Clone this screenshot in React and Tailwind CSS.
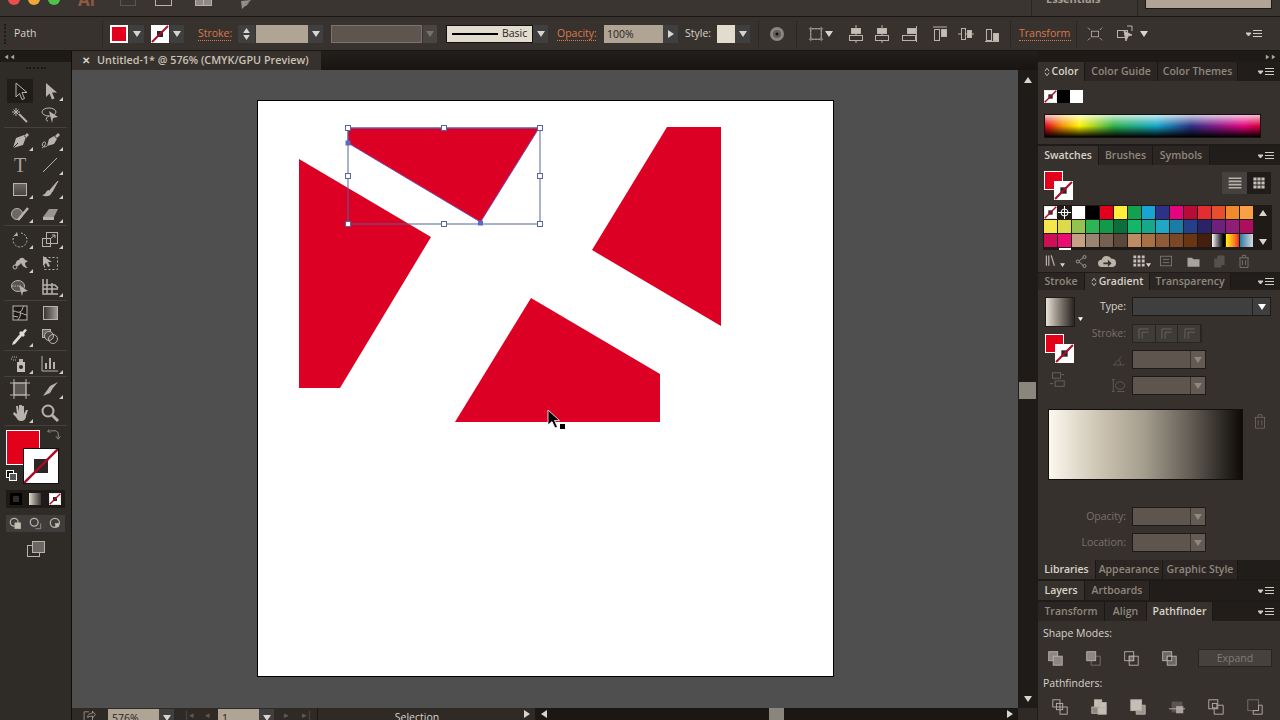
import React from 'react';

const SWATCHES = [
    ['#ffffff', '#ffffff', '#ffffff', '#000000', '#e2001a', '#ffed3b', '#12a150', '#17a6d3', '#2e3188', '#e4047f', '#b80c36', '#e42d30', '#e84e2c', '#f18a2d', '#f7a044'],
    ['#f5e64b', '#dcd94a', '#93c24f', '#2fb455', '#129a4a', '#0a6f3a', '#12b76a', '#17a88b', '#22a6c5', '#1b7ca6', '#263f8a', '#2b2367', '#6c217f', '#901d78', '#ab0f5e'],
    ['#cf0f55', '#ea0c72', '#c4a183', '#9a8371', '#74614f', '#5a473a', '#bf8b62', '#a96f45', '#8f5a38', '#7c4724', '#693512', '#461e0d'],
];

function Caret({ className = '', size = 'w-2 h-1.5', tone = 'text-[#d8d4ce]' }) {
    return (
        <svg viewBox="0 0 8 6" className={`shrink-0 ${size} ${tone} ${className}`}>
            <path d="M0 0h8L4 6z" fill="currentColor" />
        </svg>
    );
}

function Drop({ className = '', bg = 'bg-[#3f3f3f]', tone }) {
    return (
        <div className={`h-[18px] flex items-center justify-center ${bg} ${className}`}>
            <Caret tone={tone} />
        </div>
    );
}

function Sep({ className = '' }) {
    return <div className={`w-px h-[26px] bg-[#2a2623] ${className}`} />;
}

function Label({ children, className = '' }) {
    return <div className={`text-[10.5px] text-[#d87a4a] border-b border-dotted border-[#d87a4a] leading-[13px] whitespace-nowrap ${className}`}>{children}</div>;
}

function Ico({ children, className = 'w-5 h-5' }) {
    return (
        <svg viewBox="0 0 20 20" fill="none" stroke="currentColor" className={`text-[#b8b2a9] shrink-0 ${className}`}>
            {children}
        </svg>
    );
}

function NoneBox({ className = '' }) {
    return (
        <svg viewBox="0 0 18 18" className={`shrink-0 ${className}`}>
            <rect x="0.5" y="0.5" width="17" height="17" fill="#fff" stroke="#fff" />
            <rect x="6" y="6" width="6" height="6" fill="#2b2724" />
            <path d="M1 17L17 1" stroke="#a80d2a" strokeWidth="2" />
        </svg>
    );
}

function FillStroke() {
    return (
        <div className="relative w-[30px] h-[28px]">
            <div className="w-[19px] h-[19px] bg-[#e2001a] border border-white" />
            <NoneBox className="absolute left-[10px] top-[10px] w-[19px] h-[19px]" />
        </div>
    );
}

function AlignIcon({ kind }) {
    const shapes = {
        a: <><path d="M10 1v18" /><rect x="5.5" y="4.5" width="9" height="5" fill="#c4beb5" /><rect x="3.5" y="11.5" width="13" height="5" fill="#38322e" /></>,
        b: <><path d="M17.500 2v16" /><rect x="8.500" y="4.500" width="8" height="5" fill="#c4beb5" /><rect x="3.500" y="11.500" width="13" height="5" /></>,
        c: <><path d="M3 3h14" /><rect x="4.500" y="5.500" width="5" height="11" /><rect x="11.500" y="5.500" width="5" height="7" fill="#c4beb5" /></>,
        d: <><path d="M2 10h16" /><rect x="5.500" y="4.500" width="4" height="11" fill="#38322e" /><rect x="11.500" y="6.500" width="4" height="7" fill="#c4beb5" /></>,
        e: <><path d="M3 17.500h14" /><rect x="4.500" y="5.500" width="5" height="11" /><rect x="11.500" y="9.500" width="5" height="7" fill="#c4beb5" /></>,
    };
    return <Ico>{shapes[kind]}</Ico>;
}

function MenuIcon() {
    return (
        <svg viewBox="0 0 16 8" className="w-4 h-2 text-[#d0cbc3]">
            <path d="M0 3h5L2.500 6z M7 0.500h9M7 3.500h9M7 6.500h9" fill="currentColor" stroke="currentColor" strokeWidth="1" />
        </svg>
    );
}

function ControlBar() {
    return (
        <div className="h-[34px] flex items-center bg-[#38322e] border-b border-[#191614] shrink-0 text-[10.5px] text-[#d8d3cb] [&>*]:shrink-0">
            <div className="ml-1 w-[3px] h-5 border-l-2 border-dotted border-[#1d1a18]" />
            <div className="ml-[7px] w-[88px]">Path</div>
            <Sep />
            <div className="ml-[7px] w-[18px] h-[18px] bg-[#e2001a] border-2 border-white" />
            <Drop className="ml-px w-[15px]" />
            <NoneBox className="ml-[7px] w-[18px] h-[18px]" />
            <Drop className="ml-px w-[14px]" />
            <Label className="ml-[14px] w-[33px]">Stroke:</Label>
            <div className="ml-[7px] w-[17px] h-[18px] bg-[#3f3f3f] flex flex-col items-center justify-center gap-[2px]">
                <Caret className="rotate-180" size="w-[7px] h-[5px]" />
                <Caret size="w-[7px] h-[5px]" />
            </div>
            <div className="ml-px w-[52px] h-[18px] bg-[#b0a595]" />
            <Drop className="w-[15px]" />
            <div className="ml-[8px] w-[91px] h-[18px] bg-[#5e554f] border border-[#7b736b]" />
            <Drop className="ml-px w-[14px]" bg="bg-[#4a4541]" tone="text-[#77716a]" />
            <div className="ml-[9px] w-[87px] h-[18px] bg-[#e2dccf] flex items-center pl-[5px] text-[#26221f] border border-[#111]">
                <div className="w-[46px] h-[2px] bg-black" />
                <span className="ml-[4px]">Basic</span>
            </div>
            <Drop className="w-[15px]" />
            <Label className="ml-[9px] w-[39px]">Opacity:</Label>
            <div className="ml-[8px] w-[59px] h-[18px] bg-[#b0a595] text-[#26221f] pl-[3px] leading-[18px]">100%</div>
            <div className="w-[15px] h-[18px] bg-[#3f3f3f] flex items-center justify-center">
                <Caret className="-rotate-90" />
            </div>
            <div className="ml-[7px] w-[25px]">Style:</div>
            <div className="ml-[7px] w-[18px] h-[18px] bg-[#e2dccf]" />
            <Drop className="w-[15px]" />
            <Sep className="ml-[8px]" />
            <svg viewBox="0 0 16 16" className="ml-[10px] w-4 h-4">
                <circle cx="8" cy="8" r="7" fill="#8b8680" />
                <circle cx="8" cy="8" r="4" fill="#625d58" />
                <circle cx="8" cy="8" r="1.500" fill="#111" />
            </svg>
            <Sep className="ml-[11px]" />
            <Ico className="ml-[11px] w-[16px] h-[16px]">
                <rect x="3.500" y="3.500" width="13" height="13" />
                <path d="M1 3.500h18M1 16.500h18M3.500 1v18M16.500 1v18" strokeDasharray="2 2" />
            </Ico>
            <Caret className="ml-px" />
            <div className="ml-[13px]"><AlignIcon kind="a" /></div>
            <div className="ml-[6px]"><AlignIcon kind="a" /></div>
            <div className="ml-[7px]"><AlignIcon kind="b" /></div>
            <div className="ml-[11px]"><AlignIcon kind="c" /></div>
            <div className="ml-[6px]"><AlignIcon kind="d" /></div>
            <div className="ml-[6px]"><AlignIcon kind="e" /></div>
            <Sep className="ml-[8px]" />
            <Label className="ml-[8px] w-[52px]">Transform</Label>
            <Sep className="ml-[5px]" />
            <Ico className="ml-[10px] w-4 h-4">
                <rect x="5.500" y="6.500" width="9" height="7" />
                <path d="M1 2l3 3M19 2l-3 3M1 18l3-3M19 18l-3-3" />
            </Ico>
            <Ico className="ml-[12px] w-5 h-5">
                <rect x="2.500" y="6.500" width="10" height="7" />
                <path d="M9 7l8 4-4 1-2 5z" fill="#c4beb5" />
                <path d="M12 2l5 0 0 5" />
            </Ico>
            <Caret className="ml-[5px]" />
            <div className="ml-auto mr-[18px]"><MenuIcon /></div>
        </div>
    );
}

function TopBar() {
    return (
        <div className="h-[17px] flex bg-[#3a3531] border-b border-[#191614] overflow-hidden shrink-0 [&>*]:shrink-0">
            <div className="ml-2 -mt-[7px] w-3 h-3 rounded-full bg-[#ec4f4b]" />
            <div className="ml-2 -mt-[7px] w-3 h-3 rounded-full bg-[#f0a73a]" />
            <div className="ml-2 -mt-[7px] w-3 h-3 rounded-full bg-[#4cc44a]" />
            <div className="ml-[18px] -mt-[9px] w-[18px] text-[17px] font-bold text-[#8f5a41] leading-[17px]">Ai</div>
            <div className="ml-[24px] -mt-[9px] w-4 h-[15px] border border-[#5c5650]" />
            <div className="ml-[19px] -mt-[9px] w-[17px] h-[15px] border border-[#b8b2aa]" />
            <div className="ml-[23px] -mt-[9px] w-[17px] h-[15px] border border-[#b8b2aa] flex">
                <div className="w-1/2 border-r border-[#b8b2aa] bg-[#8e8982]" />
                <div className="w-1/2 bg-[#8e8982]" />
            </div>
            <svg viewBox="0 0 12 10" className="ml-[28px] w-3 h-[10px] text-[#938e87]">
                <path d="M1 1l10-1-3 3-4 1 5-1-3 3-3 0 2 0-3 3z" fill="currentColor" />
            </svg>
            <div className="ml-auto w-px h-full bg-[#2a2623]" />
            <div className="w-[105px] pl-[14px] -mt-[8px] text-[11px] font-bold text-[#a59e94] leading-[14px]">Essentials</div>
            <div className="w-px h-full bg-[#2a2623]" />
            <div className="ml-[7px] mr-[8px] w-[127px] h-[9px] bg-[#b0a595] border border-[#1d1a18] border-t-0" />
        </div>
    );
}

function Tool({ children, corner, active }) {
    return (
        <div className={`relative w-[26px] h-[24px] flex items-center justify-center ${active ? 'bg-[#1f1c1a]' : ''}`}>
            {children}
            {corner && <div className="absolute right-0 bottom-[2px] w-0 h-0 border-l-[4px] border-l-transparent border-b-[4px] border-b-[#d0cbc3]" />}
        </div>
    );
}

function ToolRow({ left, right, lc, rc, active }) {
    return (
        <div className="flex gap-[4px] pl-[7px] h-[24px] shrink-0">
            <Tool corner={lc} active={active}>{left}</Tool>
            <Tool corner={rc}>{right}</Tool>
        </div>
    );
}

function Rule({ className = '' }) {
    return <div className={`mx-[4px] h-px bg-[#45403b] shrink-0 ${className}`} />;
}

const grey = '#b8b2aa';

function Toolbar() {
    return (
        <div className="w-[72px] shrink-0 bg-[#2f2b27] border-r border-[#0f0d0c] flex flex-col">
            <div className="h-[11px] bg-[#1d1a18] flex items-center pl-1 gap-px shrink-0">
                <Caret className="rotate-90" size="w-[5px] h-1" tone="text-[#a8a39c]" />
                <Caret className="rotate-90" size="w-[5px] h-1" tone="text-[#a8a39c]" />
            </div>
            <div className="mx-auto mt-[5px] mb-[10px] w-[20px] h-[2px] border-t-2 border-dotted border-[#1a1715] shrink-0" />
            <ToolRow
                active
                left={<Ico><path d="M6 2v14l3.500-3.500 2.500 6 2.500-1-2.500-6h5z" /></Ico>}
                right={<Ico><path d="M6 2v14l3.500-3.500 2.500 6 2.500-1-2.500-6h5z" fill={grey} stroke="none" /></Ico>}
                rc
            />
            <ToolRow
                left={<Ico><path d="M6 3v8M2 7h8M3.500 4.500l5 5M8.500 4.500l-5 5" /><path d="M9 9l8 8" strokeWidth="2" /></Ico>}
                right={<Ico><ellipse cx="9" cy="7" rx="7" ry="4" /><path d="M8 16c-3 0-2-4 1-5" /><path d="M9 6l9 6-5 1-1 5z" fill={grey} stroke="none" /></Ico>}
            />
            <Rule className="mb-[1px]" />
            <ToolRow
                lc
                rc
                left={<Ico><path d="M17 2l2 2-3 3-2-2zM14 4L6 7 3 17l10-3 3-8z" fill={grey} stroke="none" /><path d="M3 17l5-5" stroke="#2f2b27" /></Ico>}
                right={<Ico><path d="M18 2l2 2-3 3-2-2zM14 5L9 8 7 15l7-2 3-5z" fill={grey} stroke="none" /><path d="M7 15c-5 3-6-3-3-4s1 5-2 6" /></Ico>}
            />
            <ToolRow
                rc
                left={<span className="font-['Liberation_Serif',serif] text-[20px] leading-none text-[#a8a39c]">T</span>}
                right={<Ico><path d="M3 17L17 3" /></Ico>}
            />
            <ToolRow
                lc
                rc
                left={<div className="w-[14px] h-[13px] border border-[#b8b2aa] bg-gradient-to-b from-[#6b6762] to-[#4a4541]" />}
                right={<Ico><path d="M18 2l-8 9 2 2z" fill={grey} /><path d="M9 11c-3 0-3 5-7 5 3 2 9 2 10-3z" fill={grey} stroke="none" /></Ico>}
            />
            <ToolRow
                lc
                rc
                left={<Ico><circle cx="7" cy="11" r="5.500" fill="#6b6762" /><path d="M8 17L18 5" strokeWidth="2.500" /></Ico>}
                right={<Ico><path d="M3 14l6-8h9l-4 8z" fill="#9a958e" stroke="none" /><path d="M3 14h11v3H3z" fill={grey} stroke="none" /></Ico>}
            />
            <Rule className="mb-[1px]" />
            <ToolRow
                lc
                rc
                left={<Ico><path d="M5 6a7 7 0 1 0 6-2" strokeDasharray="2 1.500" /><path d="M4 7l3-4 1 4z" fill={grey} stroke="none" /></Ico>}
                right={<Ico><rect x="2.500" y="9.500" width="8" height="8" /><rect x="6.500" y="3.500" width="11" height="11" /><path d="M10 10l5-4M12 6h3v3" /></Ico>}
            />
            <ToolRow
                lc
                left={<Ico><path d="M3 13c4-1 2-6 6-6 1-3 5-3 6 0l3 1-3 2c0 2 1 4 3 5-3 0-6-2-7-5-2 3-4 4-8 3z" fill={grey} stroke="none" /><circle cx="5" cy="14" r="2" fill="#2f2b27" /></Ico>}
                right={<Ico><path d="M3 3v10l3-3 2 4 2-1-2-4h4z" fill={grey} stroke="none" /><rect x="4.500" y="4.500" width="13" height="12" strokeDasharray="2 2" /></Ico>}
            />
            <ToolRow
                rc
                left={<Ico><ellipse cx="8" cy="9" rx="6.500" ry="5.500" fill="#5a5550" /><path d="M2 9h9" strokeDasharray="1.500 1" /><path d="M9 8l9 6-5 1-1 4z" fill={grey} stroke="none" /></Ico>}
                right={<Ico><path d="M3 2v15h15M7 2v15M3 8h12l3 3M3 12h15M12 6v11" strokeWidth="1.500" /></Ico>}
            />
            <Rule className="mt-[1px]" />
            <ToolRow
                left={<Ico><rect x="3" y="3" width="14" height="14" fill="#1d1a18" stroke={grey} /><path d="M3 8c4 0 4 2 7 1s2-5 4-6M10 9c1 3 0 5-2 8M10 10c3 0 4 2 7 2M3 13l5 1" /></Ico>}
                right={<div className="w-[15px] h-[14px] border border-[#b8b2aa] bg-gradient-to-r from-[#3c3835] to-[#a09a92]" />}
            />
            <ToolRow
                lc
                left={<Ico><path d="M17 3l-2-1-3 3-1-1-2 2 1 1-7 8-1 3 3-1 7-8 1 1 2-2-1-1z" fill="#e0dbd3" stroke="none" /></Ico>}
                right={<Ico><rect x="2.500" y="2.500" width="8" height="8" fill="#6b6762" /><circle cx="9" cy="9" r="4.500" fill="#4a4541" /><circle cx="13" cy="12" r="4.500" /></Ico>}
            />
            <Rule className="mt-[1px] mb-[1px]" />
            <ToolRow
                lc
                rc
                left={<Ico><rect x="7" y="8" width="8" height="10" fill="#c4beb5" stroke="none" /><circle cx="11" cy="13" r="2" fill="#2f2b27" stroke="none" /><rect x="9" y="5" width="4" height="3" fill={grey} stroke="none" /><path d="M2 3h5M3 6h4M1 5h2" strokeDasharray="1 1" /></Ico>}
                right={<Ico><path d="M2 2v15h16" /><path d="M6 15V9M10 15V4M14 15V8" strokeWidth="2" /></Ico>}
            />
            <Rule />
            <ToolRow
                rc
                left={<Ico><rect x="4" y="4" width="12" height="12" fill="#5a5550" stroke={grey} /><path d="M0 4h20M0 16h20M4 0v20M16 0v20" /></Ico>}
                right={<Ico><path d="M18 3l-8 4-7 10 7-3 3-5z" fill={grey} stroke="none" /></Ico>}
            />
            <ToolRow
                lc
                left={<Ico><path d="M3 11l3 3c1 2 2 4 5 4s5-2 5-5l2-6-2 0-2 4V3h-2v6V2H9v7L8 3H6l1 8-3-2z" fill={grey} stroke="none" /></Ico>}
                right={<Ico><circle cx="8" cy="8" r="5.500" strokeWidth="2" /><path d="M12 12l6 6" strokeWidth="3" /></Ico>}
            />
            <Rule />
            <div className="relative h-[56px] shrink-0">
                <div className="absolute left-[6px] top-[4px] w-[34px] h-[35px] bg-[#e2001a] border border-white" />
                <div className="absolute left-[23px] top-[22px] w-[36px] h-[36px] bg-white border border-[#111]">
                    <div className="absolute left-[10px] top-[10px] w-[14px] h-[14px] bg-[#2b2724]" />
                    <svg viewBox="0 0 34 34" className="absolute inset-0 w-full h-full"><path d="M0 34L34 0" stroke="#a80d2a" strokeWidth="2.500" /></svg>
                </div>
                <Ico className="absolute left-[47px] top-[2px] w-[14px] h-[14px]">
                    <path d="M4 4h9l3 3v7M3 2L1 5l4 1M13 12l3 4 3-4" />
                </Ico>
                <div className="absolute left-[6px] top-[44px] w-[8px] h-[8px] border border-white bg-[#111]" />
                <div className="absolute left-[9px] top-[47px] w-[8px] h-[8px] border border-white bg-[#555]" />
            </div>
            <div className="mx-[6px] mt-[8px] h-[18px] bg-[#1d1a18] flex items-center justify-around shrink-0">
                <div className="w-[12px] h-[12px] border-[3px] border-[#000] bg-[#2f2b27]" />
                <div className="w-[12px] h-[12px] bg-gradient-to-r from-[#e2dccf] to-[#3c3835]" />
                <NoneBox className="w-[12px] h-[12px]" />
            </div>
            <div className="mx-[6px] mt-[7px] h-[17px] bg-[#3f3d3b] flex items-center justify-around shrink-0">
                <Ico className="w-[13px] h-[13px]"><circle cx="8" cy="8" r="6" strokeWidth="2" /><rect x="9" y="9" width="9" height="9" fill="#c4beb5" /></Ico>
                <Ico className="w-[13px] h-[13px]"><circle cx="8" cy="8" r="6" strokeWidth="2" /><path d="M10 18h8v-8" /></Ico>
                <Ico className="w-[13px] h-[13px]"><circle cx="9" cy="9" r="7" strokeWidth="2" /><rect x="10" y="10" width="5" height="5" fill="#c4beb5" /></Ico>
            </div>
            <div className="mx-auto mt-[7px]">
                <Ico>
                    <rect x="1.500" y="6.500" width="12" height="11" fill="#2f2b27" />
                    <rect x="6.500" y="2.500" width="12" height="11" fill="#6b6762" />
                </Ico>
            </div>
        </div>
    );
}

function Artwork() {
    const handles = [[348, 128], [444, 128], [540, 128], [348, 176], [540, 176], [348, 224], [444, 224], [540, 224]];
    return (
        <svg viewBox="258 101 575 575" className="w-full h-full">
            <path d="M299 159L431 237L340 388H299Z" fill="#dc0024" />
            <path d="M667 127H721V326L592 250Z" fill="#dc0024" />
            <path d="M531 298L660 374V422H455Z" fill="#dc0024" />
            <path d="M348 128H539L480.500 222L348 143Z" fill="#dc0024" stroke="#7b4bb0" strokeWidth="1" />
            <rect x="348" y="128" width="192" height="96" fill="none" stroke="#56649f" strokeWidth="1" />
            {handles.map(([x, y]) => (
                <rect key={`${x}-${y}`} x={x - 2.5} y={y - 2.5} width="5" height="5" fill="#fff" stroke="#56649f" />
            ))}
            <rect x="345.500" y="140.500" width="5" height="5" fill="#5a6bc4" />
            <rect x="478" y="220.500" width="5" height="5" fill="#5a6bc4" />
            <path d="M548 410V425L552 421.500L555 428L557.500 427L554.500 420.500L559.500 420.500Z" fill="#000" stroke="#fff" strokeWidth="0.8" />
            <rect x="560" y="424" width="5" height="5" fill="#000" />
        </svg>
    );
}

function Canvas() {
    return (
        <div className="flex-1 flex flex-col min-w-0">
            <div className="h-[19px] bg-gradient-to-b from-[#231f1c] to-[#171412] flex shrink-0">
                <div className="w-[249px] bg-[#37312d] flex items-center text-[10.8px] font-semibold text-[#c9c2b6]">
                    <span className="ml-[10px] w-[15px] text-[#d8d3cb] text-[10px]">✕</span>
                    <span className="whitespace-nowrap">Untitled-1* @ 576% (CMYK/GPU Preview)</span>
                </div>
            </div>
            <div className="flex-1 flex min-h-0">
                <div className="flex-1 bg-[#4f4f4f] pl-[185px] pt-[30px] overflow-hidden">
                    <div className="w-[577px] h-[577px] bg-white border border-black">
                        <Artwork />
                    </div>
                </div>
                <div className="w-[19px] bg-[#1f1b18] flex flex-col items-center">
                    <Caret className="rotate-180 mt-[7px]" />
                    <div className="mt-[299px] w-[17px] h-[17px] bg-[#8a857d]" />
                    <Caret className="mt-auto mb-[6px]" />
                </div>
            </div>
            <div className="h-[12px] shrink-0 flex bg-[#2f2a26] overflow-hidden text-[10.5px] [&>*]:shrink-0">
                <Ico className="ml-[10px] w-[14px] h-[14px] mt-[1px]"><path d="M10 4H3v14h12v-6M8 12c0-4 3-6 7-6V3l4 5-4 5v-3c-3 0-5 1-7 2z" /></Ico>
                <div className="ml-[12px] w-[51px] h-[18px] mt-px bg-[#b0a595] text-[#26221f] pl-1 leading-[18px]">576%</div>
                <Drop className="w-[15px] mt-px" />
                <div className="ml-[10px] w-[34px] pr-[8px] flex justify-between text-[#5f5a54] text-[9px] leading-[14px]"><span>|◂</span><span>◂</span></div>
                <div className="w-[41px] h-[18px] mt-px bg-[#b0a595] text-[#26221f] pl-1 leading-[18px]">1</div>
                <Drop className="w-[15px] mt-px" />
                <div className="ml-[10px] w-[28px] flex justify-between text-[#5f5a54] text-[9px] leading-[14px]"><span>▸</span><span>▸|</span></div>
                <div className="ml-[5px] w-px bg-[#1a1715]" />
                <div className="w-[198px] text-center text-[#d8d3cb] leading-[18px]">Selection</div>
                <Caret className="-rotate-90 mt-[3px] ml-[7px]" />
                <div className="ml-[4px] flex-1 bg-[#1b1714] flex pl-[5px] [&>*]:shrink-0">
                    <Caret className="rotate-90 mt-[3px]" />
                    <div className="ml-[221px] w-[15px] bg-[#8a857d]" />
                    <Caret className="-rotate-90 ml-[222px] mt-[3px]" />
                </div>
                <div className="w-[19px] bg-[#2f2a26]" />
            </div>
        </div>
    );
}

function UpDown() {
    return (
        <svg viewBox="0 0 7 12" className="w-[6px] h-[10px] mr-[2px]" fill="none" stroke="currentColor">
            <path d="M1 5l2.500-3.500L6 5M1 7l2.500 3.500L6 7" />
        </svg>
    );
}

function Tabs({ items, menu = true, className = 'h-[19px]' }) {
    return (
        <div className={`flex bg-[#211d1a] shrink-0 text-[10.5px] font-semibold ${className}`}>
            {items.map(({ label, w, active, dia }) => (
                <div key={label} className={`flex items-center justify-center whitespace-nowrap border-r border-[#1a1715] ${w} ${active ? 'bg-[#37312d] text-[#d9d3c9]' : 'bg-[#2b2623] text-[#8f887d]'}`}>
                    {dia && <UpDown />}
                    {label}
                </div>
            ))}
            {menu && <div className="ml-auto mr-[6px] self-center"><MenuIcon /></div>}
        </div>
    );
}

function Field() {
    return (
        <div className="w-[74px] h-[19px] bg-[#5e554f] border border-[#1d1a18] flex justify-end">
            <div className="w-[15px] border-l border-[#37312d] bg-[#635a54] flex items-center justify-center">
                <Caret tone="text-[#8f887f]" />
            </div>
        </div>
    );
}

function DimIcon({ children }) {
    return <Ico className="w-4 h-4 opacity-60">{children}</Ico>;
}

function SwatchesPanel() {
    return (
        <div className="h-[107px] bg-[#37312d] shrink-0 px-[6px] pt-[6px]">
            <div className="flex justify-between">
                <FillStroke />
                <div className="mt-px w-[49px] h-[22px] bg-[#1f1c1a] flex mr-[3px]">
                    <div className="w-[25px] bg-[#45413e] flex items-center justify-center">
                        <Ico className="w-4 h-4"><path d="M2 4h16M2 8h16M2 12h16M2 16h16" strokeWidth="2" /></Ico>
                    </div>
                    <div className="flex-1 flex items-center justify-center">
                        <Ico className="w-4 h-4"><path d="M3 3h4v4H3zM8 3h4v4H8zM13 3h4v4h-4zM3 8h4v4H3zM8 8h4v4H8zM13 8h4v4h-4zM3 13h4v4H3zM8 13h4v4H8zM13 13h4v4h-4z" fill="#c4beb5" stroke="none" /></Ico>
                    </div>
                </div>
            </div>
            <div className="mt-[6px] flex h-[45px] w-[229px] bg-[#1d1a18] -ml-[1px]">
                <div className="w-[211px] pt-px pl-px overflow-hidden">
                    {SWATCHES.map((row, i) => (
                        <div key={i} className="flex gap-px mb-px">
                            {row.map((c, j) => {
                                if (i === 0 && j === 0) return <NoneBox key={j} className="w-[13px] h-[13px]" />;
                                if (i === 0 && j === 1) {
                                    return (
                                        <svg key={j} viewBox="0 0 13 13" className="w-[13px] h-[13px] shrink-0" fill="none" stroke="#fff">
                                            <circle cx="6.500" cy="6.500" r="3.500" />
                                            <path d="M6.500 0v13M0 6.500h13" />
                                        </svg>
                                    );
                                }
                                return <div key={j} className="w-[13px] h-[13px] shrink-0" style={{ backgroundColor: c }} />;
                            })}
                            {i === 2 && (
                                <>
                                    <div className="w-[13px] h-[13px] shrink-0 bg-gradient-to-r from-white to-black" />
                                    <div className="w-[13px] h-[13px] shrink-0 bg-gradient-to-r from-[#fff200] to-[#ed1c24]" />
                                    <div className="w-[13px] h-[13px] shrink-0 bg-gradient-to-r from-[#1b7ca6] to-[#d9d9d9]" />
                                </>
                            )}
                        </div>
                    ))}
                    <div className="ml-[15px] w-[12px] h-[2px] bg-white" />
                </div>
                <div className="flex-1 flex flex-col items-center justify-between py-[5px]">
                    <Caret className="rotate-180" />
                    <Caret />
                </div>
            </div>
            <div className="mt-[3px] flex items-center h-[16px]">
                <Ico className="w-4 h-4"><path d="M3 3v13M6 3v13M9 3l4 13" strokeWidth="1.500" /></Ico>
                <Caret className="mt-2" size="w-[5px] h-1" />
                <Ico className="ml-[9px] w-[15px] h-[15px]"><circle cx="5" cy="10" r="2" /><circle cx="14" cy="4" r="2" /><circle cx="14" cy="16" r="2" /><path d="M7 9l5-4M7 11l5 4" /></Ico>
                <svg viewBox="0 0 20 14" className="ml-[9px] w-[18px] h-[13px] text-[#b8b2a9] shrink-0"><path d="M4 13a4 4 0 0 1 0-8 6 6 0 0 1 11-1 4.500 4.500 0 0 1 1 9z" fill="currentColor" /><path d="M6 8h5V5l4 4-4 4v-3H6z" fill="#37312d" /></svg>
                <Ico className="ml-[16px] w-[14px] h-[14px]"><path d="M2 2h4v4H2zM8 2h4v4H8zM14 2h4v4h-4zM2 8h4v4H2zM8 8h4v4H8zM14 8h4v4h-4zM2 14h4v4H2zM8 14h4v4H8zM14 14h4v4h-4z" fill="#c4beb5" stroke="none" /></Ico>
                <Caret className="mt-2" size="w-[5px] h-1" />
                <div className="ml-[7px]"><DimIcon><rect x="3" y="4" width="14" height="12" /><path d="M6 8h8M6 12h8" /></DimIcon></div>
                <Ico className="ml-[12px] w-[15px] h-[15px]"><path d="M2 5h6l2 2h8v10H2z" fill="#a8a39c" stroke="none" /></Ico>
                <div className="ml-[10px]"><DimIcon><path d="M8 3h9v12h-4v3H4V7h4z" fill="#6b6762" stroke="none" /></DimIcon></div>
                <div className="ml-[9px]"><DimIcon><path d="M4 6h12M8 6V3h4v3M5 6v12h10V6M8 9v6M12 9v6" /></DimIcon></div>
            </div>
        </div>
    );
}

function GradRow({ label, children, dim, className = '' }) {
    return (
        <div className={`flex items-center h-[19px] ${className}`}>
            <div className={`w-[33px] mr-[6px] flex justify-end whitespace-nowrap ${dim ? 'text-[#77716a]' : 'text-[#d8d3cb]'}`}>{label}</div>
            {children}
        </div>
    );
}

function GradientPanel() {
    return (
        <div className="h-[270px] bg-[#37312d] shrink-0 text-[10.5px]">
            <div className="flex">
                <div className="w-[55px] shrink-0 pl-[7px] pt-[7px]">
                    <div className="flex">
                        <div className="w-[30px] h-[30px] bg-gradient-to-r from-[#e8e2d6] to-[#2a2522] border border-[#1d1a18]" />
                        <Caret className="mt-[20px] ml-[3px]" size="w-[5px] h-1" tone="text-white" />
                    </div>
                    <div className="mt-[7px]"><FillStroke /></div>
                    <Ico className="mt-[9px] ml-[3px] w-[18px] h-[18px] opacity-40">
                        <rect x="5" y="2" width="9" height="6" />
                        <rect x="8" y="11" width="10" height="6" />
                        <path d="M2 14h4M15 4h3" />
                    </Ico>
                </div>
                <div className="pt-[7px]">
                    <GradRow label="Type:">
                        <div className="w-[139px] h-[19px] bg-[#3f3f3f] border border-[#1d1a18] flex justify-end">
                            <div className="w-[18px] border-l border-[#222] flex items-center justify-center"><Caret tone="text-white" /></div>
                        </div>
                    </GradRow>
                    <GradRow label="Stroke:" dim className="mt-[8px]">
                        <div className="w-[70px] h-[19px] flex border border-[#28241f] bg-[#3f3b37]">
                            {[0, 1, 2].map((i) => (
                                <div key={i} className="flex-1 border-r border-[#28241f] flex items-center justify-center">
                                    <Ico className="w-[13px] h-[13px] opacity-50"><path d="M3 18V3h15M8 18V8h10" /></Ico>
                                </div>
                            ))}
                        </div>
                    </GradRow>
                    <GradRow
                        dim
                        className="mt-[7px]"
                        label={<Ico className="w-[14px] h-[14px] opacity-40"><path d="M2 17h16M2 17L14 5M10 10c2 2 2 4 2 7" /></Ico>}
                    >
                        <Field />
                    </GradRow>
                    <GradRow
                        dim
                        className="mt-[7px]"
                        label={<Ico className="w-[15px] h-[15px] opacity-40"><ellipse cx="12" cy="10" rx="6" ry="5" /><path d="M3 2v16M1 2h4M1 18h4M8 18h10" /></Ico>}
                    >
                        <Field />
                    </GradRow>
                </div>
            </div>
            <div className="flex mt-[14px] ml-[10px]">
                <div className="w-[195px] h-[71px] bg-[linear-gradient(90deg,#fbf8ee,#cfc6b5_25%,#a39b8c_50%,#5e5850_75%,#0d0a08)] border border-[#110f0d]" />
                <div className="ml-[8px] mt-[3px] opacity-40">
                    <Ico className="w-[18px] h-[18px]"><path d="M4 6h12M8 6V3h4v3M5 6v12h10V6M8 9v6M12 9v6" /></Ico>
                </div>
            </div>
            <div className="flex justify-end mr-[74px] mt-[27px] items-center">
                <div className="mr-[6px] text-[#77716a]">Opacity:</div>
                <Field />
            </div>
            <div className="flex justify-end mr-[74px] mt-[7px] items-center">
                <div className="mr-[6px] text-[#77716a]">Location:</div>
                <Field />
            </div>
        </div>
    );
}

function PathIcon({ kind }) {
    const icons = [
        <><rect x="3" y="3" width="10" height="10" fill="#8c8780" /><rect x="8" y="8" width="10" height="10" fill="#8c8780" /></>,
        <><rect x="3" y="3" width="10" height="10" fill="#8c8780" /><path d="M13 8h5v10H8v-5" opacity="0.5" /></>,
        <><rect x="3" y="3" width="10" height="10" /><rect x="8" y="8" width="10" height="10" /><rect x="8" y="8" width="5" height="5" fill="#6b6762" /></>,
        <><rect x="3" y="3" width="10" height="10" fill="#6b6762" /><rect x="8" y="8" width="10" height="10" fill="#6b6762" /><rect x="8" y="8" width="5" height="5" fill="#37312d" /></>,
        <><rect x="2" y="2" width="8" height="8" /><rect x="6" y="6" width="7" height="7" /><rect x="10" y="10" width="8" height="8" /></>,
        <><rect x="5" y="2" width="8" height="8" fill="#c4beb5" /><rect x="10" y="5" width="8" height="6" fill="#c4beb5" /><rect x="2" y="10" width="7" height="7" fill="#8c8780" /><rect x="9" y="11" width="9" height="7" fill="#c4beb5" /></>,
        <><rect x="2" y="2" width="12" height="12" fill="#c4beb5" /><path d="M14 8h4v10H8v-4h6z" fill="#9a958e" /></>,
        <><rect x="4" y="4" width="12" height="12" fill="#5a5550" stroke="none" /><rect x="9" y="9" width="8" height="8" fill="#a8a39c" stroke="none" /><path d="M1 12h18" /></>,
        <><rect x="2" y="2" width="10" height="10" /><rect x="6" y="6" width="5" height="5" /><path d="M12 8h6v10H8v-6" /></>,
        <><rect x="2" y="2" width="12" height="12" opacity="0.5" /><path d="M14 8h4v10H8v-4h6z" /></>,
    ];
    return <Ico className="w-[18px] h-[18px]">{icons[kind]}</Ico>;
}

function Panels() {
    return (
        <div className="w-[243px] shrink-0 flex flex-col bg-[#1f1b18] pl-px overflow-hidden">
            <div className="h-[11px] bg-[#1d1a18] flex items-center justify-end pr-[4px] gap-px shrink-0">
                <Caret className="-rotate-90" size="w-[5px] h-1" tone="text-[#a8a39c]" />
                <Caret className="-rotate-90" size="w-[5px] h-1" tone="text-[#a8a39c]" />
            </div>
            <Tabs items={[
                { label: 'Color', w: 'w-[47px]', active: true, dia: true },
                { label: 'Color Guide', w: 'w-[73px]' },
                { label: 'Color Themes', w: 'w-[80px]' },
            ]} />
            <div className="h-[63px] bg-[#37312d] shrink-0 pl-[6px] pt-[9px]">
                <div className="flex">
                    <NoneBox className="w-[13px] h-[13px]" />
                    <div className="w-[13px] h-[13px] bg-black" />
                    <div className="w-[13px] h-[13px] bg-white" />
                </div>
                <div className="relative mt-[11px] w-[217px] h-[24px] border border-[#111] bg-[linear-gradient(90deg,#e3001b,#f39200_8%,#fff200_16%,#2fb24a_32%,#12a6c9_52%,#2e3188_68%,#8a1a8a_80%,#e4047f_92%,#d6003a)]">
                    <div className="absolute inset-0 bg-gradient-to-b from-white/75 via-transparent to-black" />
                </div>
            </div>
            <div className="h-[2px] shrink-0" />
            <Tabs items={[
                { label: 'Swatches', w: 'w-[61px]', active: true },
                { label: 'Brushes', w: 'w-[54px]' },
                { label: 'Symbols', w: 'w-[57px]' },
            ]} />
            <SwatchesPanel />
            <div className="h-px shrink-0" />
            <Tabs className="h-[17px]" items={[
                { label: 'Stroke', w: 'w-[47px]' },
                { label: 'Gradient', w: 'w-[65px]', active: true, dia: true },
                { label: 'Transparency', w: 'w-[81px]' },
            ]} />
            <GradientPanel />
            <Tabs menu={false} items={[
                { label: 'Libraries', w: 'w-[58px]', active: true },
                { label: 'Appearance', w: 'w-[67px]' },
                { label: 'Graphic Style', w: 'w-[75px]' },
            ]} />
            <div className="h-[2px] shrink-0" />
            <Tabs items={[
                { label: 'Layers', w: 'w-[47px]', active: true },
                { label: 'Artboards', w: 'w-[65px]' },
            ]} />
            <div className="h-[2px] shrink-0" />
            <Tabs items={[
                { label: 'Transform', w: 'w-[67px]' },
                { label: 'Align', w: 'w-[42px]' },
                { label: 'Pathfinder', w: 'w-[66px]', active: true },
            ]} />
            <div className="flex-1 bg-[#37312d] text-[10.5px] text-[#d8d3cb] pl-[5px] pt-[5px]">
                <div>Shape Modes:</div>
                <div className="flex items-center mt-[6px] h-[20px]">
                    <div className="ml-[3px] flex gap-[20px]">
                        {[0, 1, 2, 3].map((k) => <PathIcon key={k} kind={k} />)}
                    </div>
                    <div className="ml-[20px] w-[74px] h-[18px] bg-[#45413e] border border-[#28241f] text-[#827c74] text-center leading-[16px]">Expand</div>
                </div>
                <div className="mt-[8px]">Pathfinders:</div>
                <div className="flex mt-[6px] ml-[8px] gap-[21px]">
                    {[4, 5, 6, 7, 8, 9].map((k) => <PathIcon key={k} kind={k} />)}
                </div>
            </div>
        </div>
    );
}

export default function App() {
    return (
        <div className="w-[1280px] h-[720px] flex flex-col overflow-hidden bg-[#2f2b27] font-['Open_Sans',sans-serif]">
            <TopBar />
            <ControlBar />
            <div className="flex-1 flex min-h-0">
                <Toolbar />
                <Canvas />
                <Panels />
            </div>
        </div>
    );
}
